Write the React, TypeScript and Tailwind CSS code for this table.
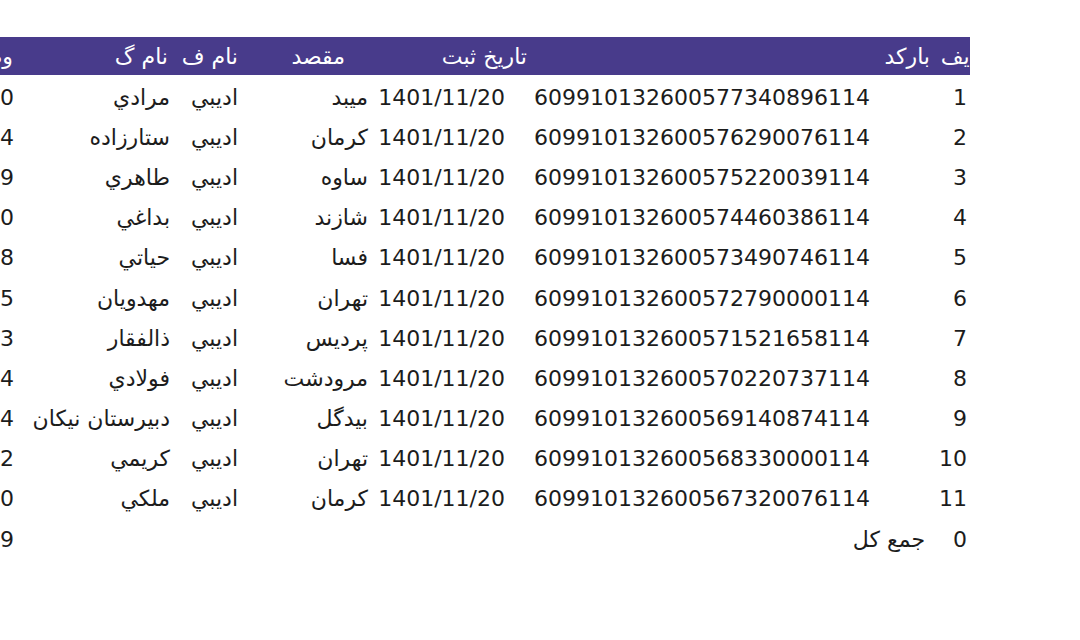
const rows = [
  { n: "1", barcode: "609910132600577340896114", date: "1401/11/20", city: "ميبد", first: "اديبي", last: "مرادي", w: "0" },
  { n: "2", barcode: "609910132600576290076114", date: "1401/11/20", city: "کرمان", first: "اديبي", last: "ستارزاده", w: "4" },
  { n: "3", barcode: "609910132600575220039114", date: "1401/11/20", city: "ساوه", first: "اديبي", last: "طاهري", w: "9" },
  { n: "4", barcode: "609910132600574460386114", date: "1401/11/20", city: "شازند", first: "اديبي", last: "بداغي", w: "0" },
  { n: "5", barcode: "609910132600573490746114", date: "1401/11/20", city: "فسا", first: "اديبي", last: "حياتي", w: "8" },
  { n: "6", barcode: "609910132600572790000114", date: "1401/11/20", city: "تهران", first: "اديبي", last: "مهدويان", w: "5" },
  { n: "7", barcode: "609910132600571521658114", date: "1401/11/20", city: "پرديس", first: "اديبي", last: "ذالفقار", w: "3" },
  { n: "8", barcode: "609910132600570220737114", date: "1401/11/20", city: "مرودشت", first: "اديبي", last: "فولادي", w: "4" },
  { n: "9", barcode: "609910132600569140874114", date: "1401/11/20", city: "بيدگل", first: "اديبي", last: "دبيرستان نيکان", w: "4" },
  { n: "10", barcode: "609910132600568330000114", date: "1401/11/20", city: "تهران", first: "اديبي", last: "کريمي", w: "2" },
  { n: "11", barcode: "609910132600567320076114", date: "1401/11/20", city: "کرمان", first: "اديبي", last: "ملکي", w: "0" },
];

// fixed sheet columns, left to right as on screen
const grid = "grid grid-cols-[20px_160px_65px_125px_160px_415px_65px] w-[1010px]";
const cell = "flex items-center justify-end whitespace-nowrap";

export default function App() {
  return (
    <div className="min-h-[640px] w-[1080px] bg-white pt-[37px] font-['DejaVu_Sans',sans-serif] text-[22px] text-[#1c1c1c]">
      <div className="w-[970px] overflow-hidden">
        <div className={`${grid} h-[38px] bg-[#483b8b] text-white`}>
          <div className={`${cell} pr-[7px]`}>وضعيت</div>
          <div className={`${cell} pr-[12px]`}>نام گ</div>
          <div className={`${cell} pr-[7px]`}>نام ف</div>
          <div className={`${cell} pr-[25px]`}>مقصد</div>
          <div className={`${cell} pr-[3px]`}>تاریخ ثبت</div>
          <div className={`${cell} pr-[15px]`}>بارکد</div>
          <div className={`${cell} pr-[20px]`}>ردیف</div>
        </div>

        <div className="pt-[2px]">
          {rows.map((r) => (
            <div key={r.n} className={`${grid} h-[40.2px]`}>
              <div className={`${cell} pr-[6px]`}>{r.w}</div>
              <div className={`${cell} pr-[10px]`}>{r.last}</div>
              <div className={`${cell} pr-[7px]`}>{r.first}</div>
              <div className={`${cell} pr-[2px]`}>{r.city}</div>
              <div className={`${cell} pr-[25px]`}>{r.date}</div>
              <div className={`${cell} pr-[75px]`}>{r.barcode}</div>
              <div className={`${cell} pr-[43px]`}>{r.n}</div>
            </div>
          ))}
          <div className={`${grid} h-[40.2px]`}>
            <div className={`${cell} pr-[6px]`}>9</div>
            <div />
            <div />
            <div />
            <div />
            <div className={`${cell} pr-[20px]`}>جمع کل</div>
            <div className={`${cell} pr-[43px]`}>0</div>
          </div>
        </div>
      </div>
    </div>
  );
}
